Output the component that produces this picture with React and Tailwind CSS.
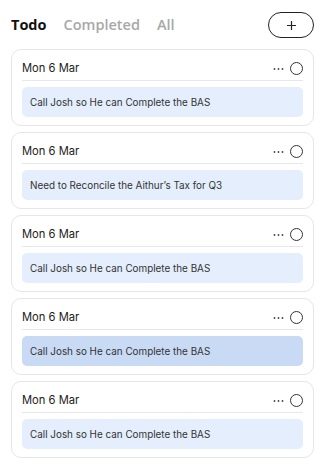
import React from "react";

const items = [
  { date: "Mon 6 Mar", text: "Call Josh so He can Complete the BAS", active: false },
  { date: "Mon 6 Mar", text: "Need to Reconcile the Aithur\u2019s Tax for Q3", active: false },
  { date: "Mon 6 Mar", text: "Call Josh so He can Complete the BAS", active: false },
  { date: "Mon 6 Mar", text: "Call Josh so He can Complete the BAS", active: true },
  { date: "Mon 6 Mar", text: "Call Josh so He can Complete the BAS", active: false },
];

function Card({ date, text, active }) {
  return (
    <div className="h-[77px] rounded-[10px] border border-[#e6e6e6] bg-white px-[10px] pt-[8px]">
      <div className="flex h-[23px] items-center justify-between border-b border-[#e8e8e8] pb-[1px]">
        <span className="text-[11.2px] text-[#222]">{date}</span>
        <div className="flex items-center gap-[6px]">
          <svg width="11" height="4" viewBox="0 0 11 4">
            <circle cx="1.5" cy="2" r="0.9" fill="#444" />
            <circle cx="5.5" cy="2" r="0.9" fill="#444" />
            <circle cx="9.5" cy="2" r="0.9" fill="#444" />
          </svg>
          <div className="h-[13px] w-[13px] rounded-full border border-[#333]" />
        </div>
      </div>
      <div
        className={`mt-[6px] flex h-[30px] items-center rounded-[5px] px-[8px] text-[9.9px] text-[#333] ${
          active ? "bg-[#c9daf4]" : "bg-[#e4eefc]"
        }`}
      >
        {text}
      </div>
    </div>
  );
}

export default function App() {
  return (
    <div className="h-[476px] w-[325px] bg-white px-[11px] font-['Inter',sans-serif]">
      <div className="flex h-[49px] items-center justify-between pt-[1px]">
        <div className="flex items-center gap-[17px] font-['Open_Sans',sans-serif] text-[14.5px] font-semibold">
          <span className="text-[#111] font-bold">Todo</span>
          <span className="text-[#a8a8a8]">Completed</span>
          <span className="text-[#a8a8a8]">All</span>
        </div>
        <button className="flex h-[26px] w-[46px] items-center justify-center rounded-full border border-[#222] bg-white">
          <svg width="11" height="11" viewBox="0 0 11 11">
            <path d="M5.5 1v9M1 5.5h9" stroke="#222" strokeWidth="1.2" />
          </svg>
        </button>
      </div>
      <div className="flex flex-col gap-[6px]">
        {items.map((it, i) => (
          <Card key={i} {...it} />
        ))}
      </div>
    </div>
  );
}
